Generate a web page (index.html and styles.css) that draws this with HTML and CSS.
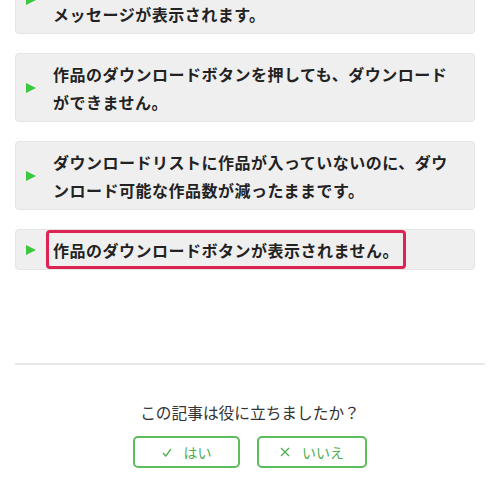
FILE: index.html
```html
<!DOCTYPE html>
<html lang="ja">
<head>
  <meta charset="UTF-8">
  <title>よくある質問 | ダウンロード</title>
  <meta name="viewport" content="width=device-width, initial-scale=1.0">
  <link rel="stylesheet" href="styles.css">
</head>
<body>
  <!-- FAQ LIST -->
  <div class="faq-list">
    <div class="faq-item">
      <span class="arrow"></span>
      <span class="faq-title">作品をダウンロードしようとすると、エラー<br>メッセージが表示されます。</span>
    </div>
    <div class="faq-item">
      <span class="arrow"></span>
      <span class="faq-title">作品のダウンロードボタンを押しても、ダウンロードができません。</span>
    </div>
    <div class="faq-item">
      <span class="arrow"></span>
      <span class="faq-title">ダウンロードリストに作品が入っていないのに、ダウンロード可能な作品数が減ったままです。</span>
    </div>
    <div class="faq-item">
      <span class="arrow"></span>
      <span class="faq-title marked">作品のダウンロードボタンが表示されません。</span>
    </div>
  </div>

  <!-- FEEDBACK -->
  <div class="feedback">
    <p class="question">この記事は役に立ちましたか？</p>
    <div class="answers">
      <button class="answer">
        <svg class="mark" width="10" height="9" viewBox="0 0 10 9"><path d="M1 5 L3.8 8 L9 1" fill="none" stroke="currentColor" stroke-width="1.3"/></svg>はい
      </button>
      <button class="answer">
        <svg class="mark" width="10" height="10" viewBox="0 0 10 10"><path d="M1 1 L9 9 M9 1 L1 9" fill="none" stroke="currentColor" stroke-width="1.3"/></svg>いいえ
      </button>
    </div>
  </div>
</body>
</html>
```

FILE: styles.css
```css
body {
  margin: 0;
  background: #ffffff;
  font-family: 'Noto Sans CJK JP', 'Noto Sans', sans-serif;
  color: #222;
}
.faq-list {
  margin: -35px 25px 0 15px;
  display: flex;
  flex-direction: column;
  gap: 19px;
}
.faq-item {
  display: flex;
  align-items: center;
  background: #efefef;
  border: 1px solid #e4e4e4;
  border-radius: 4px;
  padding: 0 8px 0 10px;
}
.arrow {
  flex: none;
  width: 0;
  height: 0;
  border-top: 5px solid transparent;
  border-bottom: 5px solid transparent;
  border-left: 10px solid #3cc83c;
  margin-right: 10px;
}
.faq-title {
  font-size: 16px;
  font-weight: bold;
  letter-spacing: 0.5px;
  line-height: 28px;
  padding: 2.5px 4px;
  border: 3px solid transparent;
  border-radius: 4px;
}
.faq-title.marked {
  border-color: #dc2352;
}
.feedback {
  margin: 93px 15px 0;
  border-top: 2px solid #e8e8e8;
  text-align: center;
}
.question {
  margin: 36px 0 12px;
  font-size: 15.7px;
  color: #333;
}
.answers {
  display: flex;
  justify-content: center;
  gap: 17px;
}
.answer {
  display: flex;
  align-items: center;
  justify-content: center;
  height: 32px;
  border: 2px solid #5cbd5c;
  border-radius: 5px;
  background: #fff;
  color: #4caf50;
  font-family: inherit;
  font-size: 14px;
  cursor: pointer;
}
.answer:first-child {
  width: 107px;
}
.answer:last-child {
  width: 110px;
}
.mark {
  margin-right: 12px;
}
```
